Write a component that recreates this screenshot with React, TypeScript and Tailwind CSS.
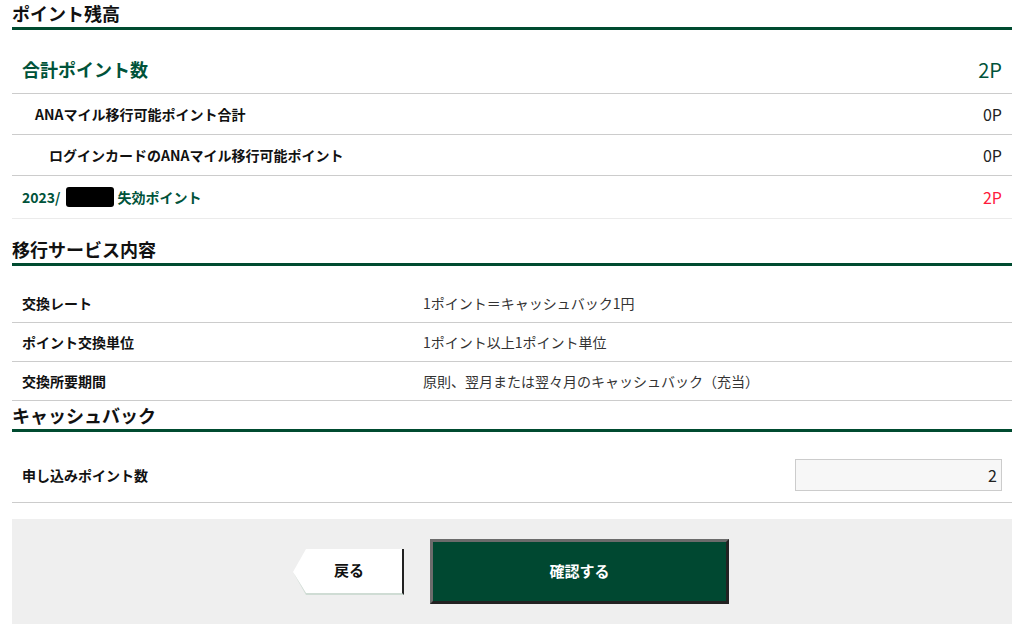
const FONT = { fontFamily: '"Noto Sans CJK JP", "Noto Sans", sans-serif' };

const balanceRows = [
  { label: 'ANAマイル移行可能ポイント合計', value: '0P', indent: 'pl-[23px]' },
  { label: 'ログインカードのANAマイル移行可能ポイント', value: '0P', indent: 'pl-[37px]' },
];

const serviceRows = [
  { label: '交換レート', value: '1ポイント＝キャッシュバック1円' },
  { label: 'ポイント交換単位', value: '1ポイント以上1ポイント単位' },
  { label: '交換所要期間', value: '原則、翌月または翌々月のキャッシュバック（充当）' },
];

function SectionTitle({ children }: { children: React.ReactNode }) {
  return (
    <h2 className="h-[30px] border-b-[3px] border-[#004b30] text-[18px] font-bold leading-[26px] text-[#111]">
      {children}
    </h2>
  );
}

export default function App() {
  return (
    <div className="min-h-screen bg-white pl-3 pr-[11px] text-[#222]" style={FONT}>
      {/* ポイント残高 */}
      <SectionTitle>ポイント残高</SectionTitle>
      <div className="mt-4">
        <div className="flex h-[48px] items-center justify-between border-b border-[#cccccc] px-[10px]">
          <span className="text-[18px] font-bold text-[#00533a]">合計ポイント数</span>
          <span className="text-[20px] text-[#00533a]">2P</span>
        </div>
        {balanceRows.map(r => (
          <div
            key={r.label}
            className={`flex h-[41px] items-center justify-between border-b border-[#cccccc] pr-[10px] ${r.indent}`}
          >
            <span className="text-[14px] font-bold text-[#111]">{r.label}</span>
            <span className="text-[16px] text-[#222]">{r.value}</span>
          </div>
        ))}
        <div className="flex h-[43px] items-center justify-between border-b border-[#ebebeb] px-[10px]">
          <span className="flex items-center text-[14px] font-bold text-[#00533a]">
            2023/
            <span className="ml-[6px] mr-[3px] inline-block h-[20px] w-[48px] rounded-[3px] bg-black" />
            失効ポイント
          </span>
          <span className="text-[16px] text-[#ff1a3c]">2P</span>
        </div>
      </div>

      {/* 移行サービス内容 */}
      <div className="mt-[17px]">
        <SectionTitle>移行サービス内容</SectionTitle>
      </div>
      <div className="mt-[18px]">
        {serviceRows.map(r => (
          <div key={r.label} className="flex h-[39px] items-center border-b border-[#cccccc] px-[10px] text-[14px]">
            <span className="w-[401px] font-bold text-[#111]">{r.label}</span>
            <span className="text-[#333]">{r.value}</span>
          </div>
        ))}
      </div>

      {/* キャッシュバック */}
      <div className="mt-px">
        <SectionTitle>キャッシュバック</SectionTitle>
      </div>
      <div className="mt-4 flex h-[55px] items-center justify-between border-b border-[#cccccc] pl-[10px] pr-[10px]">
        <span className="text-[14px] font-bold text-[#111]">申し込みポイント数</span>
        <input
          defaultValue="2"
          className="h-[32px] w-[207px] border border-[#cccccc] bg-[#f7f7f7] px-1 text-right text-[16px] text-[#222] outline-none"
          style={FONT}
        />
      </div>

      {/* Buttons */}
      <div className="mt-[16px] flex h-[105px] items-center justify-center gap-[26px] bg-[#efefef] pr-[2px]">
        <button className="flex h-[46px] items-stretch">
          <svg width="13" height="46" viewBox="0 0 13 46" className="block">
            <polygon points="13,0 0,23 13,44" fill="#ffffff" />
            <polygon points="0,23 13,44 13,46" fill="#cfdcd4" />
          </svg>
          <span className="flex w-[98px] items-center justify-center border-r-2 border-b-2 border-r-[#222] border-b-[#cfdcd4] bg-white pr-[10px] text-[15px] font-bold text-[#111]">
            戻る
          </span>
        </button>
        <button className="flex h-[65px] w-[299px] items-center justify-center border-[3px] border-t-[#6b6b6b] border-l-[#6b6b6b] border-r-[#222] border-b-[#222] bg-[#004831] text-[15px] font-bold text-white">
          確認する
        </button>
      </div>
    </div>
  );
}
